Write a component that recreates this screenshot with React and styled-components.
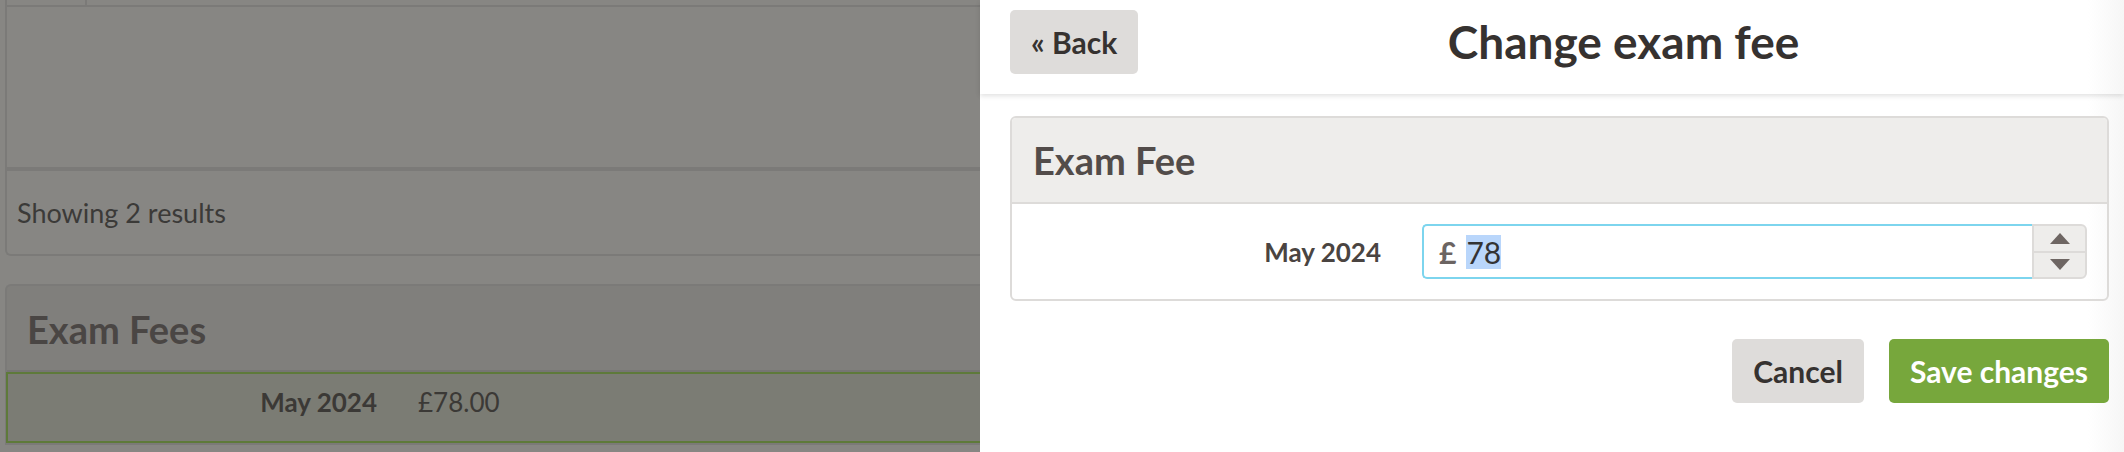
import React from "react";
import styled, { createGlobalStyle } from "styled-components";

const GlobalStyle = createGlobalStyle`
  html, body {
    margin: 0;
    padding: 0;
  }
  body {
    font-family: Lato, "Open Sans", sans-serif;
    overflow: hidden;
  }
`;

const Screen = styled.div`
  display: flex;
  width: 2124px;
  height: 452px;
  overflow: hidden;
`;

/* dimmed page behind the drawer */
const Backdrop = styled.div`
  flex: none;
  width: 980px;
  box-sizing: border-box;
  padding-left: 5px;
  background: #878683;
  display: flex;
  flex-direction: column;
  overflow: hidden;
`;

const ResultsCard = styled.div`
  border-left: 2px solid #7b7a78;
  border-bottom: 2px solid #7b7a78;
  border-bottom-left-radius: 6px;
  margin-right: -20px;
`;

const TableEnd = styled.div`
  display: flex;
  height: 5px;
  border-bottom: 2px solid #7b7a78;
`;

const TableCell = styled.div`
  width: 78px;
  border-right: 2px solid #7b7a78;
`;

const EmptyRows = styled.div`
  height: 160px;
  border-bottom: 4px solid #7b7a78;
`;

const ResultsFooter = styled.div`
  height: 83px;
  display: flex;
  align-items: center;
  padding: 0 0 0 10px;
  font-size: 27px;
  color: #3b3a38;
`;

const FeesCard = styled.div`
  margin-top: 28px;
  margin-right: -20px;
  border: 2px solid #7b7a78;
  border-right: none;
  border-radius: 6px 0 0 0;
  background: #807f7c;
`;

const DimHeading = styled.h2`
  margin: 0;
  height: 86px;
  box-sizing: border-box;
  padding: 20px 0 0 20px;
  font-size: 38px;
  font-weight: 700;
  color: #4a4644;
  border-bottom: 2px solid #767573;
`;

const FeeRow = styled.div`
  display: flex;
  height: 71px;
  box-sizing: border-box;
  padding-top: 12px;
  background: #7b7c74;
  border: 2px solid #5e7a3a;
  border-right: none;
  margin-left: -1px;
`;

const FeeLabel = styled.div`
  width: 369px;
  text-align: right;
  font-size: 26px;
  font-weight: 700;
  color: #3b3936;
`;

const FeeValue = styled.div`
  margin-left: 41px;
  font-size: 26px;
  color: #3b3936;
`;

/* drawer */
const Drawer = styled.div`
  flex: none;
  width: 1144px;
  display: flex;
  flex-direction: column;
  background: linear-gradient(to right, #ffffff calc(100% - 36px), #f6f6f6 100%);
`;

const DrawerHeader = styled.header`
  display: flex;
  align-items: center;
  height: 94px;
  box-sizing: border-box;
  padding: 10px 15px 21px 30px;
  box-shadow: 0 2px 5px rgba(0, 0, 0, 0.12);
  position: relative;
  z-index: 1;
`;

const Button = styled.button`
  height: 64px;
  padding: 0 ${(p) => p.$pad || 20}px;
  border: none;
  border-radius: 5px;
  font-family: Lato, sans-serif;
  font-size: 30px;
  font-weight: 700;
  background: ${(p) => (p.$primary ? "#77a73c" : "#dedcda")};
  color: ${(p) => (p.$primary ? "#ffffff" : "#363230")};
  cursor: pointer;
`;

const Title = styled.h1`
  flex: 1;
  margin: 0;
  text-align: center;
  font-size: 46px;
  font-weight: 700;
  color: #363230;
`;

const DrawerBody = styled.div`
  padding: 22px 15px 0 30px;
`;

const Card = styled.section`
  border: 2px solid #dddbd9;
  border-radius: 6px;
  overflow: hidden;
`;

const CardHeading = styled.h2`
  margin: 0;
  height: 86px;
  box-sizing: border-box;
  padding: 19px 0 0 21px;
  background: #eeedeb;
  border-bottom: 2px solid #dddbd9;
  font-size: 38px;
  font-weight: 700;
  color: #524c4a;
`;

const FieldRow = styled.div`
  display: flex;
  align-items: center;
  padding: 20px 20px 20px 0;
`;

const FieldLabel = styled.label`
  width: 369px;
  margin-right: 41px;
  text-align: right;
  font-size: 26px;
  font-weight: 700;
  color: #4a4441;
`;

const InputGroup = styled.div`
  flex: 1;
  display: flex;
  height: 55px;
`;

const Field = styled.div`
  flex: 1;
  display: flex;
  align-items: center;
  gap: 10px;
  padding-left: 15px;
  border: 2px solid #7dd5ee;
  border-right: none;
  border-radius: 5px 0 0 5px;
  font-size: 30px;
  color: #333333;
`;

const Currency = styled.span`
  font-weight: 700;
  color: #6b6462;
`;

const Selected = styled.span`
  background: #b9d6fb;
  line-height: 34px;
`;

const Spinner = styled.div`
  width: 55px;
  display: flex;
  flex-direction: column;
  border: 2px solid #dddbd9;
  border-radius: 0 6px 6px 0;
  background: #eeedeb;
  box-sizing: border-box;
`;

const SpinHalf = styled.div`
  flex: 1;
  display: flex;
  align-items: center;
  justify-content: center;
  border-top: ${(p) => (p.$lower ? "2px solid #dddbd9" : "none")};
`;

const Actions = styled.div`
  display: flex;
  justify-content: flex-end;
  gap: 25px;
  margin-top: 38px;
`;

const Arrow = ({ down }) => (
  <svg width="20" height="11" viewBox="0 0 20 11">
    <path d={down ? "M0 0 H20 L10 11 Z" : "M0 11 H20 L10 0 Z"} fill="#6e6663" />
  </svg>
);

export default function App() {
  return (
    <>
      <GlobalStyle />
      <Screen>
        <Backdrop>
          <ResultsCard>
            <TableEnd>
              <TableCell />
            </TableEnd>
            <EmptyRows />
            <ResultsFooter>Showing 2 results</ResultsFooter>
          </ResultsCard>
          <FeesCard>
            <DimHeading>Exam Fees</DimHeading>
            <FeeRow>
              <FeeLabel>May 2024</FeeLabel>
              <FeeValue>£78.00</FeeValue>
            </FeeRow>
          </FeesCard>
        </Backdrop>

        <Drawer>
          <DrawerHeader>
            <Button $pad={21}>« Back</Button>
            <Title>Change exam fee</Title>
          </DrawerHeader>
          <DrawerBody>
            <Card>
              <CardHeading>Exam Fee</CardHeading>
              <FieldRow>
                <FieldLabel>May 2024</FieldLabel>
                <InputGroup>
                  <Field>
                    <Currency>£</Currency>
                    <Selected>78</Selected>
                  </Field>
                  <Spinner>
                    <SpinHalf>
                      <Arrow />
                    </SpinHalf>
                    <SpinHalf $lower>
                      <Arrow down />
                    </SpinHalf>
                  </Spinner>
                </InputGroup>
              </FieldRow>
            </Card>
            <Actions>
              <Button $pad={21}>Cancel</Button>
              <Button $primary $pad={21}>Save changes</Button>
            </Actions>
          </DrawerBody>
        </Drawer>
      </Screen>
    </>
  );
}
